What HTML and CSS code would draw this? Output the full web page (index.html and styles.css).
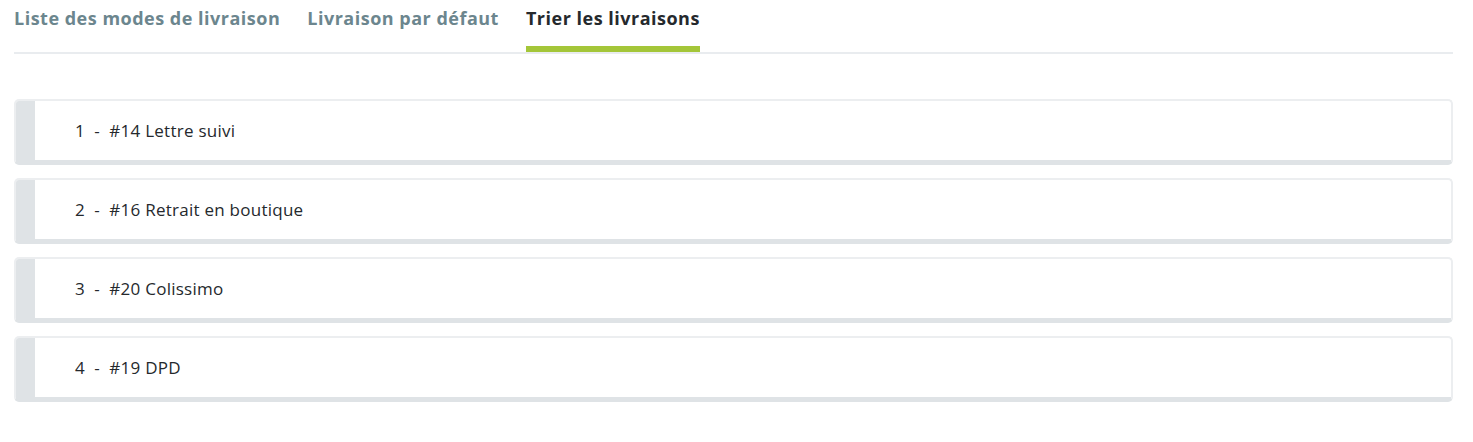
FILE: index.html
```html
<!DOCTYPE html>
<html lang="fr">
<head>
<meta charset="utf-8">
<title>Trier les livraisons</title>
<link rel="stylesheet" href="styles.css">
</head>
<body>
<div class="page">
  <nav class="tabs">
    <a class="tab">Liste des modes de livraison</a>
    <a class="tab">Livraison par défaut</a>
    <a class="tab active">Trier les livraisons</a>
  </nav>
  <ul class="sort-list">
    <li class="item"><span class="handle"></span><span class="label">1&nbsp; - &nbsp;#14 Lettre suivi</span></li>
    <li class="item"><span class="handle"></span><span class="label">2&nbsp; - &nbsp;#16 Retrait en boutique</span></li>
    <li class="item"><span class="handle"></span><span class="label">3&nbsp; - &nbsp;#20 Colissimo</span></li>
    <li class="item"><span class="handle"></span><span class="label">4&nbsp; - &nbsp;#19 DPD</span></li>
  </ul>
</div>
</body>
</html>
```
FILE: styles.css
```css
html, body {
  margin: 0;
  padding: 0;
  background: #ffffff;
}
body {
  font-family: "Open Sans", "Liberation Sans", sans-serif;
  color: #25292d;
}
.page {
  padding: 0 20px 0 14px;
}
.tabs {
  display: flex;
  gap: 27px;
  border-bottom: 2px solid #e9ecef;
  height: 52px;
  box-sizing: content-box;
}
.tab {
  display: flex;
  align-items: flex-start;
  padding-top: 6px;
  font-size: 18px;
  font-weight: 700;
  letter-spacing: 0.5px;
  color: #6c868e;
  box-sizing: border-box;
  height: 52px;
  text-decoration: none;
}
.tab.active {
  color: #25292d;
  border-bottom: 6px solid #a4c639;
}
.sort-list {
  list-style: none;
  margin: 45px 0 0;
  padding: 0;
  display: flex;
  flex-direction: column;
  gap: 13px;
}
.item {
  display: flex;
  align-items: center;
  height: 66px;
  box-sizing: border-box;
  border: 2px solid #eceef0;
  border-bottom: 5px solid #dfe3e6;
  border-radius: 5px;
  background: #ffffff;
  overflow: hidden;
}
.handle {
  align-self: stretch;
  width: 19px;
  background: #dfe3e6;
}
.label {
  margin-left: 40px;
  font-size: 17px;
  letter-spacing: 0.25px;
  color: #25292d;
}
```
